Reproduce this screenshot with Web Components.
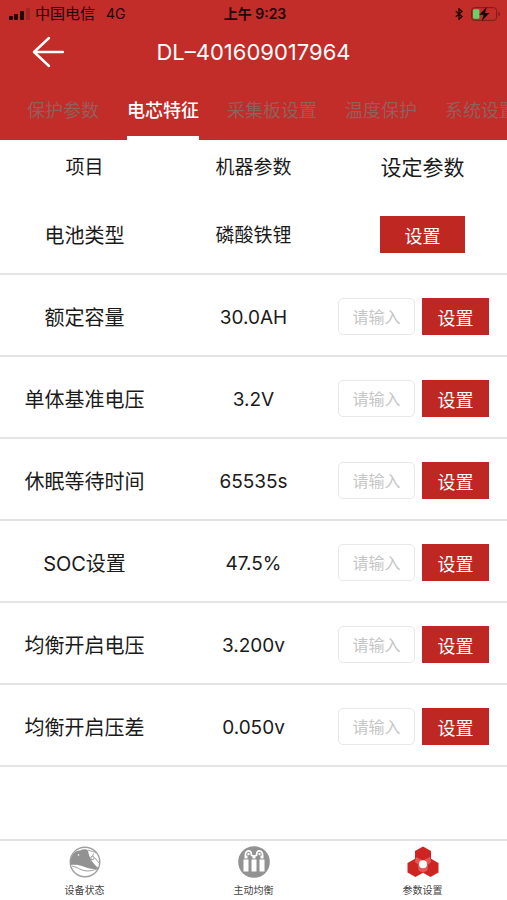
<!DOCTYPE html>
<html lang="zh-CN">
<head>
<meta charset="UTF-8">
<meta name="viewport" content="width=device-width, initial-scale=1">
<title>参数设置</title>
<style>
  :root {
    --brand: #c22c29;
    --button: #bf2723;
    --line: #e3e3e3;
    --ink: #1a1a1a;
  }
  body {
    margin: 0;
    background: #fff;
    color: var(--ink);
    font-family: Inter, "Noto Sans CJK SC", sans-serif;
  }
</style>
</head>
<body>
<battery-app>
  <status-bar slot="header" carrier="中国电信" network="4G" time="上午 9:23"></status-bar>
  <nav-header slot="header">DL–401609017964</nav-header>
  <top-tabs slot="header">
    <a href="#protect">保护参数</a>
    <a href="#cell" aria-current="page">电芯特征</a>
    <a href="#board">采集板设置</a>
    <a href="#temp">温度保护</a>
    <a href="#system">系统设置</a>
  </top-tabs>
  <param-table></param-table>
  <bottom-bar slot="footer">
    <bar-item icon="status" href="#status">设备状态</bar-item>
    <bar-item icon="balance" href="#balance">主动均衡</bar-item>
    <bar-item icon="params" href="#params">参数设置</bar-item>
  </bottom-bar>
</battery-app>

<script>
/**
 * Page shell: red header, content, bottom bar
 */
class BatteryApp extends HTMLElement {
  constructor() {
    super();
    this.attachShadow({ mode: 'open' }).innerHTML = `
      <style>
        :host {
          display: flex;
          flex-direction: column;
          min-height: 100vh;
        }
        header { background: var(--brand); }
        main { flex: 1; }
      </style>
      <header><slot name="header"></slot></header>
      <main><slot></slot></main>
      <slot name="footer"></slot>
    `;
  }
}

/**
 * Phone status bar
 */
class StatusBar extends HTMLElement {
  connectedCallback() {
    this.attachShadow({ mode: 'open' }).innerHTML = `
      <style>
        :host {
          display: grid;
          grid-template-columns: 1fr auto 1fr;
          align-items: center;
          height: 28px;
          padding: 0 6px 0 9px;
          color: #210706;
          font-size: 14px;
          line-height: 20px;
        }
        .left, .right { display: flex; align-items: center; }
        .left { gap: 5px; }
        .carrier { font-size: 15px; }
        .network { margin-left: 6px; }
        .time { font-weight: 600; }
        .right { justify-content: flex-end; gap: 8px; }
        svg { display: block; }
      </style>
      <div class="left">
        <svg width="21" height="12" viewBox="0 0 21 12" aria-hidden="true">
          <rect x="0" y="8" width="4" height="4" rx="1" fill="#210706"/>
          <rect x="5" y="6" width="4" height="6" rx="1" fill="#210706"/>
          <rect x="11" y="3" width="4" height="9" rx="1" fill="#210706"/>
          <rect x="17" y="0" width="4" height="12" rx="1" fill="#a02725"/>
        </svg>
        <span class="carrier">${this.getAttribute('carrier')}</span>
        <span class="network">${this.getAttribute('network')}</span>
      </div>
      <span class="time">${this.getAttribute('time')}</span>
      <div class="right">
        <svg width="8" height="12" viewBox="0 0 8 12" fill="none" stroke="#210706" stroke-width="1.4" aria-hidden="true">
          <path d="M.8 3.2 7 8.5 4 11.2V.8L7 3.5.8 8.8"/>
        </svg>
        <svg width="30" height="14" viewBox="0 0 30 14" aria-hidden="true">
          <rect x=".6" y=".6" width="25" height="12.8" rx="3" fill="none" stroke="#7d1c1a"/>
          <path d="M27.5 4.6c2 .8 2 4 0 4.8z" fill="#7d1c1a"/>
          <rect x="2" y="2.2" width="6.4" height="9.6" rx="1.4" fill="#65d36c"/>
          <path d="M15.8 0 8.2 7.8h4.4L10.8 14l7.6-8H14z" fill="#160504"/>
        </svg>
      </div>
    `;
  }
}

/**
 * Title row with the back button
 */
class NavHeader extends HTMLElement {
  constructor() {
    super();
    this.attachShadow({ mode: 'open' }).innerHTML = `
      <style>
        :host {
          display: grid;
          grid-template-columns: 64px 1fr 64px;
          align-items: center;
          height: 48px;
          color: #fff;
        }
        button {
          justify-self: end;
          padding: 0;
          border: 0;
          background: none;
          color: inherit;
        }
        svg { display: block; }
        h1 {
          margin: 0;
          font-size: 22px;
          font-weight: 400;
          line-height: 28px;
          text-align: center;
        }
      </style>
      <button type="button" aria-label="返回">
        <svg width="32" height="32" viewBox="0 0 32 32" fill="none" stroke="currentColor" stroke-width="2.4" stroke-linecap="round" stroke-linejoin="round">
          <path d="M17 2 2 16l15 14M2 16h29"/>
        </svg>
      </button>
      <h1><slot></slot></h1>
    `;
  }
}

class TopTabs extends HTMLElement {
  constructor() {
    super();
    this.attachShadow({ mode: 'open' }).innerHTML = `
      <style>
        :host { display: block; }
        nav {
          display: flex;
          gap: 28px;
          height: 64px;
          padding-left: 27px;
          overflow-x: auto;
          scrollbar-width: none;
        }
        ::slotted(a) {
          flex: none;
          box-sizing: border-box;
          height: 64px;
          padding-top: 21px;
          border-bottom: 4px solid transparent;
          color: #92605c;
          font-size: 18px;
          line-height: 28px;
          text-decoration: none;
          white-space: nowrap;
        }
        ::slotted(a[aria-current]) {
          border-color: #fff;
          color: #fff;
          font-weight: 500;
        }
      </style>
      <nav><slot></slot></nav>
    `;
  }
}

/**
 * Parameter list
 */
const params = [
  { name: '电池类型', value: '磷酸铁锂', picker: true },
  { name: '额定容量', value: '30.0AH' },
  { name: '单体基准电压', value: '3.2V' },
  { name: '休眠等待时间', value: '65535s' },
  { name: 'SOC设置', value: '47.5%' },
  { name: '均衡开启电压', value: '3.200v' },
  { name: '均衡开启压差', value: '0.050v' }
];

class ParamTable extends HTMLElement {
  constructor() {
    super();
    this.attachShadow({ mode: 'open' });
  }

  connectedCallback() {
    this.render();
  }

  renderControl(item) {
    if (item.picker) {
      return '<div class="control"><button type="button" class="wide">设置</button></div>';
    }
    return `
      <div class="control entry">
        <input type="text" placeholder="请输入" aria-label="${item.name}">
        <button type="button">设置</button>
      </div>`;
  }

  render() {
    this.shadowRoot.innerHTML = `
      <style>
        :host { display: block; }
        table {
          width: 100%;
          table-layout: fixed;
          border-collapse: separate;
          border-spacing: 0;
          font-size: 20px;
          line-height: 28px;
          text-align: center;
        }
        th, td { box-sizing: border-box; padding: 0; font-weight: 400; }
        thead th { height: 53px; padding-top: 3px; font-size: 19px; }
        thead th:last-child { font-size: 21px; }
        tbody th, tbody td {
          height: 82px;
          padding-top: 6px;
          border-bottom: 2px solid var(--line);
        }
        tbody td { font-size: 19px; }
        tbody td:last-child { padding-top: 3px; }
        .control { display: flex; justify-content: center; }
        .entry { gap: 7px; padding-right: 18px; }
        input, button {
          box-sizing: border-box;
          height: 37px;
          font-family: inherit;
        }
        input {
          flex: 1;
          min-width: 0;
          padding: 0 8px;
          border: 1px solid #e8e8e8;
          border-radius: 5px;
          background: #fff;
          font-size: 16px;
          text-align: center;
        }
        input::placeholder { color: #c6c6c6; }
        button {
          width: 67px;
          padding: 0;
          border: 0;
          background: var(--button);
          color: #fff;
          font-size: 18px;
        }
        .wide { width: 50%; }
      </style>
      <table>
        <thead>
          <tr><th scope="col">项目</th><th scope="col">机器参数</th><th scope="col">设定参数</th></tr>
        </thead>
        <tbody>
          ${params.map(item => `
            <tr>
              <th scope="row">${item.name}</th>
              <td>${item.value}</td>
              <td>${this.renderControl(item)}</td>
            </tr>`).join('')}
        </tbody>
      </table>
    `;
  }
}

/**
 * Bottom navigation
 */
const icons = {
  status: `
    <circle cx="16" cy="16" r="14.8" fill="#fff" stroke="#a0a0a0" stroke-width="1.4"/>
    <path d="M1.500 14C3 8 7 4 11 4.500c3-1.500 6-2 8 0C20 12 24 18 30 22.500c-7 1.500-12-.5-17-2.500-4-1.500-8-1.500-11.500-1z" fill="#929292"/>
    <path d="M3 20c6 1 9 5 15 5 4 0 7-1 10-2M19 4c4 2 6 1 8 3M24.500 7.500l-1 3M22 13.500l-1 3M26 12l4 5" fill="none" stroke="#a0a0a0"/>
    <circle cx="23.500" cy="12" r="1.700" fill="#fff" stroke="#929292"/>
    <circle cx="9.500" cy="9" r=".8" fill="#fff"/>`,
  balance: `
    <circle cx="16" cy="16" r="15.800" fill="#929292"/>
    <path d="M5.500 13.500h5v12h-5zM13.500 13.500h5v12h-5zM21.500 13.500h5v12h-5z" fill="#fff"/>
    <path d="M6.500 9.500h3v3h-3zM14.500 10h3v2.500h-3zM22.500 9.500h3v3h-3z" fill="#fff"/>
    <path d="M7.500 10C6.500 3.500 14.500 3.500 13 8.500M24.500 10c1-6.500-7-6.500-5.500-1.500M13 8.500c1 2 5 2 6 0" fill="none" stroke="#fff" stroke-width="1.700"/>
    <circle cx="10.500" cy="8" r="1.200" fill="#fff"/>
    <circle cx="21.500" cy="8" r="1.200" fill="#fff"/>`,
  params: `
    <path d="M16 .5l8 4.600v9.400L16 19l-8-4.500V5.100z" fill="#cf2522"/>
    <path d="M8.500 12.500l8 4.600v9.300L8.500 31 .5 26.400v-9.300z" fill="#cf2522"/>
    <path d="M23.500 12.500l8 4.600v9.300l-8 4.600-8-4.600v-9.300z" fill="#cf2522"/>
    <path d="M9 11l7 3.500 7-3.500 1 5-3 2.500-.5 6L16 26.500 11.500 24.500l-.5-6L8 16z" fill="#e65a56"/>
    <circle cx="16" cy="18.200" r="4" fill="#fff"/>`
};

class BottomBar extends HTMLElement {
  constructor() {
    super();
    this.attachShadow({ mode: 'open' }).innerHTML = `
      <style>
        :host { display: block; border-top: 2px solid var(--line); }
        nav { display: flex; height: 59px; }
        ::slotted(*) { flex: 1; }
      </style>
      <nav aria-label="主导航"><slot></slot></nav>
    `;
  }
}

class BarItem extends HTMLElement {
  connectedCallback() {
    this.attachShadow({ mode: 'open' }).innerHTML = `
      <style>
        :host { display: block; }
        a {
          display: flex;
          flex-direction: column;
          align-items: center;
          gap: 4px;
          padding-top: 5px;
          color: #444;
          font-size: 10px;
          line-height: 16px;
          text-decoration: none;
        }
      </style>
      <a href="${this.getAttribute('href')}">
        <svg width="32" height="32" viewBox="0 0 32 32" aria-hidden="true">${icons[this.getAttribute('icon')]}</svg>
        <span><slot></slot></span>
      </a>
    `;
  }
}

customElements.define('battery-app', BatteryApp);
customElements.define('status-bar', StatusBar);
customElements.define('nav-header', NavHeader);
customElements.define('top-tabs', TopTabs);
customElements.define('param-table', ParamTable);
customElements.define('bottom-bar', BottomBar);
customElements.define('bar-item', BarItem);
</script>
</body>
</html>
